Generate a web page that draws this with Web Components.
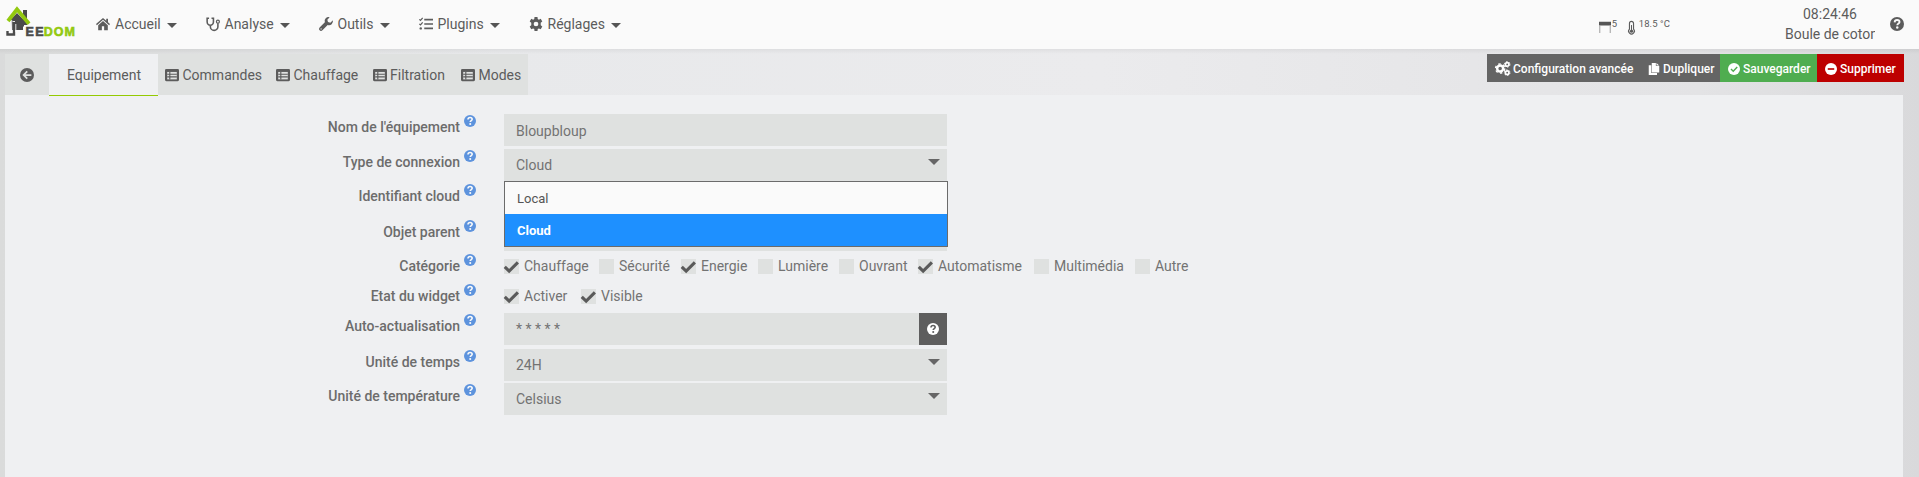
<!DOCTYPE html>
<html lang="fr"><head><meta charset="utf-8"><title>Jeedom</title>
<style>html,body{margin:0;height:477px;overflow:hidden}body{font:14px/20px Roboto,sans-serif;color:#5c5c5c}</style></head>
<body><jee-app></jee-app>
<script>
const q='<circle cx="8" cy="8" r="8" fill="currentColor"/><path d="M5.3 6.1C5.4 4.3 6.5 3.4 8.1 3.4c1.7 0 2.8 1 2.8 2.3 0 1.7-2.600 1.700-2.600 3.600" fill="none" stroke="var(--hole,#fafafa)" stroke-width="2.100"/><circle cx="8.300" cy="12" r="1.400" fill="var(--hole,#fafafa)"/>';
const icons={
home:'<path fill="currentColor" d="M8 1 0 8l1 1.300L8 3.200l7 6.100L16 8l-2.300-2V2h-2v2.200zM8 4.500 2.500 9.300V15H6.700V10.500H9.300V15H13.500V9.300z"/>',
steth:'<path fill="none" stroke="currentColor" stroke-width="1.800" d="M3.500 1.500H1.300V5.500a3.600 4 0 0 0 7.200 0V1.500H6.300M5 9.500v1.500a4 4 0 0 0 8.600 0V7"/><circle cx="13.600" cy="5.300" r="1.700" fill="none" stroke="currentColor" stroke-width="1.400"/>',
wrench:'<path fill="currentColor" d="M15.800 3.800 13 6.500 10.300 5.700 9.500 3 12.200.200A4.500 4.500 0 0 0 6.700 6L.700 12a2 2 0 0 0 3.200 3.200l6-6A4.500 4.500 0 0 0 15.800 3.800z"/><circle cx="2.400" cy="13.600" r=".7" fill="#fafafa"/>',
tasks:'<path d="M6 3h10M6 8h10M6 13h10" stroke="currentColor" stroke-width="1.900"/><path fill="none" stroke="currentColor" stroke-width="1.400" d="m.4 2.700 1.300 1.200L4.200 1M.4 7.900l1.300 1.200L4.200 6.200"/><circle cx="2" cy="13" r="1.400" fill="currentColor"/>',
cog:'<path fill="currentColor" fill-rule="evenodd" d="M6.300 0 6 2.200l-1.300.8L2.600 2.100.800 5.100l1.800 1.500v2.800L.800 10.900l1.800 3 2.100-.9 1.300.8.300 2.200h3.400l.3-2.200 1.300-.8 2.100.9 1.800-3-1.800-1.500V6.600l1.800-1.500-1.800-3-2.100.9-1.300-.8L9.700 0zM8 5.300a2.700 2.700 0 1 1 0 5.400 2.700 2.700 0 0 1 0-5.400z"/>',
cogs:'<circle cx="5.500" cy="8" r="3.200" fill="none" stroke="currentColor" stroke-width="2.600"/><circle cx="5.500" cy="8" r="4.900" fill="none" stroke="currentColor" stroke-width="1.500" stroke-dasharray="2.565"/><circle cx="13" cy="3.600" r="1.900" fill="none" stroke="currentColor" stroke-width="1.800"/><circle cx="13" cy="3.600" r="3" fill="none" stroke="currentColor" stroke-width="1" stroke-dasharray="1.570"/><circle cx="13" cy="12.400" r="1.900" fill="none" stroke="currentColor" stroke-width="1.800"/><circle cx="13" cy="12.400" r="3" fill="none" stroke="currentColor" stroke-width="1" stroke-dasharray="1.570"/>',
copy:'<path fill="currentColor" d="M5 0h5.500v4H15v8.500H5zM11.300 0 15 3.300H11.300zM1 3h3.300v10.200H12V16H1z"/>',
check:'<circle cx="8" cy="8" r="8" fill="currentColor"/><path d="m4 8 3 3 5.300-5.600" fill="none" stroke="var(--hole)" stroke-width="1.900"/>',
minus:'<circle cx="8" cy="8" r="8" fill="currentColor"/><path d="M3.700 8h8.600" stroke="var(--hole)" stroke-width="2.200"/>',
back:'<circle cx="8" cy="8" r="8" fill="currentColor"/><path d="M13 8H4.500M8.300 3.800 4.100 8l4.200 4.200" fill="none" stroke="var(--hole)" stroke-width="2"/>',
list:'<rect y="1" width="16" height="14" rx="1.500" fill="currentColor"/><path d="M2.500 4.500h11v8.500h-11z" fill="var(--hole)"/><path d="M2.500 7.200h11M2.500 10.200h11M5.500 4.500v8.500" stroke="currentColor" stroke-width="1.300"/>',
q,
tick:'<path d="m.8 8.300 4.700 4.600L14.800 3.600" fill="none" stroke="currentColor" stroke-width="3.300"/>',
shutter:'<path d="M0 1h16v5H0z" fill="#555"/><path d="M1 6v10M15 6v10" stroke="#aaa" stroke-width="1.500"/>',
thermo:'<path d="M5.500 10V3a2.500 2.500 0 0 1 5 0v7a3.500 3.500 0 1 1-5 0z" fill="none" stroke="currentColor" stroke-width="1.400"/><path d="M8 5v7" stroke="currentColor" stroke-width="1.300"/><circle cx="8" cy="12.500" r="2" fill="currentColor"/>'};
const def=(n,css,html)=>customElements.define(n,class extends HTMLElement{connectedCallback(){const r=this.attachShadow({mode:'open'});r.innerHTML='<style>*{box-sizing:border-box}'+css+'</style>'+(typeof html==='function'?html(this):html)}});
def('jee-icon',':host{display:block;width:14px;height:14px;flex:none}svg{display:block;width:100%;height:100%;overflow:visible}',e=>`<svg viewBox="0 0 16 16">${icons[e.getAttribute('name')]}</svg>`);
def('jee-logo',':host{display:block;width:70px;height:32px}svg{display:block;overflow:visible}text{font:bold 12.5px "Liberation Sans",sans-serif}',`<svg width="70" height="32" viewBox="5 6 70 32"><path fill="#4b4b4b" d="M23 10h4v15h-4zM11 19l6-6 7 7v6.500h-1V30H12z"/><path d="M14 22v12.500H7.500V31" fill="none" stroke="#4b4b4b" stroke-width="2.400"/><path d="M11.700 20v12M15.800 24v8M12.500 21.500h2.500" stroke="#fafafa" stroke-width=".9"/><path d="M8 21 17 9.300 29 23.800" fill="none" stroke="#93c90f" stroke-width="3.800"/><text x="25.500" y="35.700" fill="#4b4b4b" stroke="#4b4b4b" stroke-width=".6" textLength="18">EE</text><text x="43.800" y="35.700" fill="#93c90f" stroke="#93c90f" stroke-width=".6" textLength="31">DOM</text></svg>`);
def('nav-item',':host{display:flex;align-items:center;height:20px}.i{width:19px}.c{margin:2px 0 0 6.500px;border:5px solid transparent;border-top-color:#555;border-bottom:0}',e=>`<div class="i"><jee-icon name="${e.getAttribute('icon')}"></jee-icon></div><slot></slot><i class="c"></i>`);
def('top-bar',`:host{display:flex;height:49px;background:#fafafa}jee-logo{margin:6px 21px 0 5px}nav{display:flex;margin-top:14px;flex:1}
.w{display:flex;font-size:9.500px;line-height:12px;margin:18px 115px 0 0;letter-spacing:.1px;align-items:flex-start}.w jee-icon{margin-top:3px}.time{width:90px;text-align:center;line-height:20px;padding-top:4px;white-space:nowrap;overflow:hidden}.time div{overflow:hidden}.help{margin:17px 15px 0 15px}`,
`<jee-logo></jee-logo><nav>${[['home','Accueil',109.5],['steth','Analyse',113],['wrench','Outils',100],['tasks','Plugins',110],['cog','Réglages',100]].map(a=>`<nav-item icon="${a[0]}" style="width:${a[2]}px">${a[1]}</nav-item>`).join('')}</nav>
<div class="w"><jee-icon name="shutter" style="width:12px;height:12px"></jee-icon><span style="width:13px;margin-left:1px">5</span><jee-icon name="thermo" style="width:13px;height:13px"></jee-icon><span style="margin-left:1px">18.5 °C</span></div>
<div class="time"><div>08:24:46</div><div style="text-align:left">Boule de coton</div></div><jee-icon class="help" name="q"></jee-icon>`);
def('tab-item',':host{display:flex;align-items:center;gap:3.500px;height:41px;--hole:#dfe1e0}:host([active]){background:#eff0f2;border-bottom:1px solid #94ca02;height:42px;width:109px;justify-content:center;padding-left:1px;z-index:1}',e=>(e.getAttribute('icon')?`<jee-icon name="${e.getAttribute('icon')}"></jee-icon>`:'')+'<slot></slot>');
def('act-btn',':host{display:flex;height:28px;align-items:center;background:var(--hole);color:#fff;font-weight:500;font-size:12px;gap:3px;padding:1px 0 0 8px;box-sizing:border-box;white-space:nowrap}jee-icon{width:12px;height:12px}:host([icon=cogs]) jee-icon{width:15px;height:15px}',e=>`<jee-icon name="${e.getAttribute('icon')}"></jee-icon><slot></slot>`);
def('tool-row',':host{display:flex;height:41px;justify-content:space-between}.t{display:flex;flex:none;width:523px;background:#dfe1e0}.b{display:flex;margin-right:15px}',
`<div class="t"><tab-item icon="back" style="width:44px;padding-left:15px;box-sizing:border-box"></tab-item><tab-item active style="box-sizing:border-box">Equipement</tab-item><tab-item icon="list" style="width:111px;margin-left:7px">Commandes</tab-item><tab-item icon="list" style="width:96.500px">Chauffage</tab-item><tab-item icon="list" style="width:88.500px">Filtration</tab-item><tab-item icon="list">Modes</tab-item></div>
<div class="b"><act-btn icon="cogs" style="--hole:#646464;width:153px">Configuration avancée</act-btn><act-btn icon="copy" style="--hole:#646464;width:80px">Dupliquer</act-btn><act-btn icon="check" style="--hole:#4fad50;width:97px">Sauvegarder</act-btn><act-btn icon="minus" style="--hole:#bd0000;width:87px">Supprimer</act-btn></div>`);
def('form-row',':host{display:flex;height:var(--h);color:#666;align-items:flex-start}.l{width:455px;text-align:right;font-weight:500;line-height:26px;color:#6c6c6c}.l+jee-icon{width:12px;height:12px;color:#5d93dd;margin:1px 28px 0 4px}',e=>`<div class="l">${e.getAttribute('label')}</div><jee-icon name="q"></jee-icon><slot></slot>`);
def('text-field',':host{display:flex;width:443px;height:32px;background:#dfe1e0;color:#737373;padding-left:12px;align-items:center;justify-content:space-between;box-sizing:border-box}.c{border:6px solid transparent;border-top-color:#666;border-bottom:0;margin:-6px 7px 0 0}.b{display:flex;width:28px;height:32px;background:#5e5e5e;color:#fff;align-items:center;justify-content:center;--hole:#5e5e5e}.b jee-icon{width:12px;height:12px}',e=>'<span><slot></slot></span>'+(e.hasAttribute('select')?'<i class="c"></i>':e.hasAttribute('help')?'<div class="b"><jee-icon name="q"></jee-icon></div>':''));
def('check-box',':host{display:flex;gap:5px;line-height:26px;color:#737373}.k{width:15px;height:15px;background:#dfe1e0;margin-top:6px}.k jee-icon{width:15px;height:15px;color:#5a5a5a}',e=>`<div class="k">${e.hasAttribute('checked')?'<jee-icon name="tick"></jee-icon>':''}</div><slot></slot>`);
def('option-list',':host{display:block;position:absolute;left:0;top:32px;width:444px;height:66px;border:1px solid #6b6b6b;background:#fafafa;z-index:3;font-size:13px;box-sizing:border-box;line-height:32px}div{padding:1px 0 0 12px;height:32px}.s{background:#1e90ff;color:#fff;font-weight:700}.f{color:#555}','<div class="f">Local</div><div class="s">Cloud</div>');
const cb=(a,w)=>a.map((x,i)=>`<check-box ${x[0]==='+'?'checked':''} style="width:${w[i]}px">${x.replace('+','')}</check-box>`).join('');
def('equip-form',':host{display:block;margin:0 16px 0 5px;height:382px;background:#eff0f2;padding-top:19px;box-sizing:border-box}.s{position:relative}',
`<form-row label="Nom de l'équipement" style="--h:35px"><text-field style="padding-top:1px">Bloupbloup</text-field></form-row>
<form-row label="Type de connexion" style="--h:34px"><div class="s"><text-field select>Cloud</text-field><option-list></option-list></div></form-row>
<form-row label="Identifiant cloud" style="--h:36px"><text-field></text-field></form-row>
<form-row label="Objet parent" style="--h:34px"><text-field></text-field></form-row>
<form-row label="Catégorie" style="--h:30px">${cb(['+Chauffage','Sécurité','+Energie','Lumière','Ouvrant','+Automatisme','Multimédia','Autre'],[95,82,77,81,79,116,101,70])}</form-row>
<form-row label="Etat du widget" style="--h:30px">${cb(['+Activer','+Visible'],[77,80])}</form-row>
<form-row label="Auto-actualisation" style="--h:36px"><text-field help>* * * * *</text-field></form-row>
<form-row label="Unité de temps" style="--h:34px"><text-field select>24H</text-field></form-row>
<form-row label="Unité de température" style="--h:32px"><text-field select>Celsius</text-field></form-row>`);
def('jee-app',':host{display:block;height:477px;background:linear-gradient(90deg,#dadbdb 0,#e8e9eb 500px,#ebebed 1100px,#e3e3e5 1700px,#d9d9db 100%)}.sh{height:5px;background:linear-gradient(#0000000d,#0000)}tool-row{margin-left:5px}','<top-bar></top-bar><div class="sh"></div><tool-row></tool-row><equip-form></equip-form>');
</script></body></html>
